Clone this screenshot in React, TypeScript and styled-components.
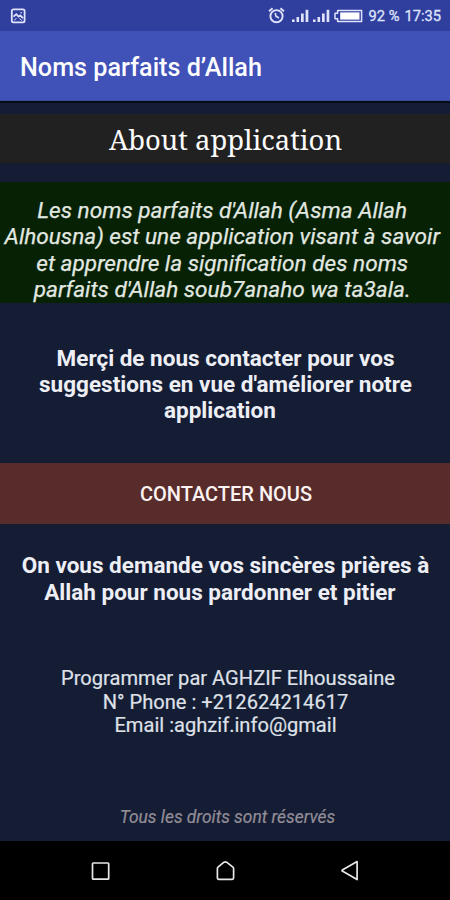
import React from "react";
import styled, { createGlobalStyle, css } from "styled-components";

const GlobalStyle = createGlobalStyle`
  * { box-sizing: border-box; }
  html, body { margin: 0; padding: 0; background: #000; }
  body { font-family: Roboto, "Liberation Sans", sans-serif; overflow: hidden; }
`;

const Screen = styled.div`
  display: flex;
  flex-direction: column;
  width: 450px;
  height: 900px;
  overflow: hidden;
  background: #151d35;
  color: #f1f2f6;
`;

const StatusBar = styled.div`
  display: flex;
  align-items: center;
  justify-content: space-between;
  flex: none;
  height: 31px;
  padding: 0 9px 0 10px;
  background: #303e9e;
  color: #dfe3fb;
`;

const StatusGroup = styled.div`
  display: flex;
  align-items: center;
`;

const StatusIcon = styled.svg<{ $gap?: number }>`
  display: block;
  flex: none;
  margin-right: ${(p) => p.$gap ?? 0}px;
`;

const StatusText = styled.span<{ $gap?: number }>`
  margin-right: ${(p) => p.$gap ?? 0}px;
  font-size: 14.7px;
  line-height: 18px;
  white-space: pre;
  -webkit-text-stroke: 0.3px currentColor;
`;

const AppBar = styled.header`
  display: flex;
  align-items: center;
  flex: none;
  height: 70px;
  padding: 5px 20px 0 20px;
  background: #4051b7;
  border-bottom: 1px solid #3a4a9f;
`;

const AppTitle = styled.h1`
  margin: 0;
  font-size: 25.2px;
  font-weight: 500;
  line-height: 30px;
  color: #fdfdff;
`;

const Shadow = styled.div`
  flex: none;
  height: 2px;
  background: #070b18;
`;

const Content = styled.main`
  display: flex;
  flex-direction: column;
  flex: 1;
  padding-top: 11px;
`;

const Heading = styled.h2`
  flex: none;
  height: 49px;
  margin: 0 0 19px;
  padding: 7px 0 0 1px;
  background: #212121;
  color: #fbfbfb;
  font-family: "Noto Serif", "DejaVu Serif Condensed", "DejaVu Serif", serif;
  font-size: 27.4px;
  font-weight: 400;
  line-height: 38px;
  text-align: center;
`;

const Paragraph = styled.p<{ $bold?: boolean }>`
  margin: 0;
  font-size: 22.5px;
  line-height: 26.4px;
  text-align: center;
  white-space: pre;
  ${(p) =>
    p.$bold &&
    css`
      font-weight: 700;
      color: #edeff5;
    `}
`;

const Description = styled.section`
  flex: none;
  height: 121px;
  padding: 15.8px 0 0;
  background: #062103;
  color: #e2e8e1;
  font-style: italic;
  -webkit-text-stroke: 0.25px currentColor;

  ${Paragraph} {
    font-size: 22.6px;
  }
`;

const Suggestion = styled.section`
  flex: none;
  height: 160px;
  padding: 41.5px 0 0 1px;
`;

const ContactButton = styled.button`
  flex: none;
  height: 61px;
  margin: 0;
  padding: 0 0 0 2px;
  border: 0;
  background: #592c2c;
  color: #fbf3f1;
  font-family: inherit;
  font-size: 20px;
  font-weight: 500;
  text-transform: uppercase;
`;

const Prayer = styled.section`
  flex: none;
  height: 143px;
  padding: 28.4px 0 0 1px;
`;

const Credits = styled.address`
  flex: none;
  height: 140px;
  padding-left: 6px;
  color: #dfe1e8;
  font-size: 20.1px;
  font-style: normal;
  line-height: 23.6px;
  text-align: center;
  white-space: pre;
  -webkit-text-stroke: 0.2px currentColor;
`;

const Rights = styled.footer`
  padding-left: 5px;
  color: #938d96;
  font-size: 17.4px;
  font-style: italic;
  line-height: 20px;
  text-align: center;
  -webkit-text-stroke: 0.2px currentColor;
`;

const NavBar = styled.nav`
  display: grid;
  grid-template-columns: repeat(3, 124.5px);
  justify-content: center;
  justify-items: center;
  align-items: center;
  flex: none;
  height: 59px;
  background: #000;
`;

const NavIcon = styled.svg`
  display: block;
  fill: none;
  stroke: #e8e8e8;
  stroke-width: 1.7;
  stroke-linejoin: round;
`;

const Signal = ({ gap }: { gap: number }) => (
  <StatusIcon $gap={gap} width="17" height="14" viewBox="0 0 17 14" fill="currentColor">
    <rect x="0" y="10.5" width="2.6" height="2.5" />
    <rect x="4.5" y="8" width="2.6" height="5" />
    <rect x="9" y="4.5" width="2.7" height="8.5" />
    <rect x="13.6" y="0.8" width="2.7" height="12.2" />
  </StatusIcon>
);

export default function App() {
  return (
    <>
      <GlobalStyle />
      <Screen>
        <StatusBar>
          <StatusIcon width="16" height="16" viewBox="0 0 16 16" fill="none" stroke="currentColor">
            <rect x="1.8" y="1.4" width="12.8" height="13" rx="1.6" strokeWidth="1.8" />
            <path d="M3.5 8.7 L6.3 6.2 L8.6 8.6 L10.2 7.4 L13 10.2" strokeWidth="1.8" />
            <path d="M4.2 12.2 L6.5 10.4 M9.5 10.6 L11.8 12.4" strokeWidth="1" />
            <circle cx="11.2" cy="4.8" r="0.8" fill="currentColor" stroke="none" />
          </StatusIcon>
          <StatusGroup>
            <StatusIcon $gap={7} width="17" height="17" viewBox="0 0 17 17" fill="none" stroke="currentColor">
              <circle cx="8.5" cy="9.2" r="6.1" strokeWidth="1.9" />
              <path d="M1 4.2 L4.6 1.2 M16 4.2 L12.4 1.2" strokeWidth="1.9" />
              <path d="M7.2 6 L8 9.2 L11 11" strokeWidth="1.6" />
            </StatusIcon>
            <Signal gap={4} />
            <Signal gap={4} />
            <StatusIcon $gap={6} width="29" height="14" viewBox="0 0 29 14" fill="none" stroke="currentColor">
              <path d="M3.6 1.4 H27.6 V12.6 H3.6 V9.8 H1 V4.2 H3.6 Z" strokeWidth="1.5" strokeLinejoin="round" />
              <rect x="6.2" y="3.4" width="19.3" height="7.2" fill="#fff" stroke="none" />
            </StatusIcon>
            <StatusText $gap={5}>92 %</StatusText>
            <StatusText>17:35</StatusText>
          </StatusGroup>
        </StatusBar>
        <AppBar>
          <AppTitle>Noms parfaits d’Allah</AppTitle>
        </AppBar>
        <Shadow />
        <Content>
          <Heading>About application</Heading>
          <Description>
            <Paragraph>
              {"Les noms parfaits d'Allah (Asma Allah \nAlhousna) est une application visant à savoir \net apprendre la signification des noms \nparfaits d'Allah soub7anaho wa ta3ala. "}
            </Paragraph>
          </Description>
          <Suggestion>
            <Paragraph $bold>
              {"Merçi de nous contacter pour vos\nsuggestions en vue d'améliorer notre\napplication  "}
            </Paragraph>
          </Suggestion>
          <ContactButton type="button">Contacter nous</ContactButton>
          <Prayer>
            <Paragraph $bold>
              {"On vous demande vos sincères prières à\nAllah pour nous pardonner et pitier  "}
            </Paragraph>
          </Prayer>
          <Credits>
            {"Programmer par AGHZIF Elhoussaine\nN° Phone : +212624214617 \nEmail :aghzif.info@gmail "}
          </Credits>
          <Rights>Tous les droits sont réservés</Rights>
        </Content>
        <NavBar>
          <NavIcon width="20" height="20" viewBox="0 0 20 20">
            <rect x="1.5" y="2" width="16.2" height="16.2" rx="0.8" />
          </NavIcon>
          <NavIcon width="20" height="22" viewBox="0 0 20 22">
            <path d="M2.4 8.6 Q2.4 7.8 3 7.2 L9 2.2 Q10.3 1.4 11.6 2.2 L17.9 7.2 Q18.6 7.8 18.6 8.6 V17.8 Q18.6 19.4 17.2 19.4 H3.8 Q2.4 19.4 2.4 17.8 Z" />
          </NavIcon>
          <NavIcon width="20" height="22" viewBox="0 0 20 22">
            <path d="M17.1 1.6 V19.6 L2.3 11.1 Q1.6 10.6 2.3 10.1 Z" />
          </NavIcon>
        </NavBar>
      </Screen>
    </>
  );
}
